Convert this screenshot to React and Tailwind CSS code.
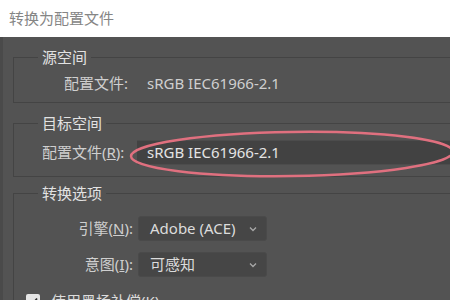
import React from "react";

const font = { fontFamily: '"Noto Sans", "Noto Sans CJK SC", sans-serif' };

const Chevron = () => (
	<svg width="10" height="10" viewBox="0 0 10 10" className="text-[#a8a8a8]">
		<path d="M2 3.5 L5 6.5 L8 3.5" fill="none" stroke="currentColor" strokeWidth="1.3" />
	</svg>
);

const Select = ({ children }) => (
	<div className="flex h-[25px] w-[129px] items-center justify-between rounded-[3px] border border-[#4a4a4a] bg-[#464646] pl-[11px] pr-[8px] text-[15px] text-[#dcdcdc]">
		<span>{children}</span>
		<Chevron />
	</div>
);

export default function App() {
	return (
		<div
			className="flex h-[300px] w-[450px] flex-col overflow-hidden bg-[#535353]"
			style={font}
		>
			<div className="flex h-[37px] shrink-0 items-center bg-white pl-[9px] text-[15px] text-[#858585]">
				转换为配置文件
			</div>

			<div className="relative flex-1 border-l-[3px] border-[#4a4a4a] pl-[10px] pt-[11px]">
				{/* 源空间 */}
				<fieldset className="mr-[-30px] h-[55px] border border-[#444444] pl-[24px]">
					<legend className="px-[4px] text-[15px] leading-[19px] text-[#e2e2e2]">
						源空间
					</legend>
					<div className="mt-[5px] flex items-center pl-[26px] text-[15px] text-[#cfcfcf]">
						<span className="w-[83px]">配置文件:</span>
						<span>sRGB IEC61966-2.1</span>
					</div>
				</fieldset>

				{/* 目标空间 */}
				<fieldset className="mr-[-30px] mt-[11px] h-[63px] border border-[#444444] pl-[28px]">
					<legend className="-ml-[4px] px-[4px] text-[15px] leading-[19px] text-[#e2e2e2]">
						目标空间
					</legend>
					<div className="mt-[7px] flex items-center text-[15px] text-[#cfcfcf]">
						<span className="w-[95px] shrink-0">
							配置文件(<span className="underline">R</span>):
						</span>
						<div className="flex h-[25px] flex-1 items-center border-y border-[#4c4c4c] bg-[#424242] pl-[10px] text-[#e4e4e4]">
							sRGB IEC61966-2.1
						</div>
					</div>
				</fieldset>

				{/* 转换选项 */}
				<fieldset className="mr-[-30px] mt-[7px] h-[140px] border border-[#444444] pl-[24px]">
					<legend className="px-[4px] text-[15px] leading-[19px] text-[#e2e2e2]">
						转换选项
					</legend>
					<div className="mt-[13px] flex flex-col gap-[11px] text-[15px] text-[#cfcfcf]">
						<div className="flex items-center">
							<span className="w-[100px] shrink-0 pr-[5px] text-right">
								引擎(<span className="underline">N</span>):
							</span>
							<Select>Adobe (ACE)</Select>
						</div>
						<div className="flex items-center">
							<span className="w-[100px] shrink-0 pr-[5px] text-right">
								意图(<span className="underline">I</span>):
							</span>
							<Select>可感知</Select>
						</div>
						<div className="-ml-[12px] mt-[2px] flex items-center gap-[11px]">
							<div className="flex h-[14px] w-[14px] items-center justify-center rounded-[2px] bg-[#e6e6e6]">
								<svg width="11" height="11" viewBox="0 0 11 11">
									<path d="M2 5.5 L4.5 8 L9 2.5" fill="none" stroke="#333" strokeWidth="1.8" />
								</svg>
							</div>
							<span className="text-[#dcdcdc]">
								使用黑场补偿(<span className="underline">K</span>)
							</span>
						</div>
					</div>
				</fieldset>

				{/* highlight ellipse */}
				<svg
					className="pointer-events-none absolute left-0 top-0"
					width="450"
					height="263"
				>
					<ellipse
						cx="289"
						cy="117"
						rx="161"
						ry="22"
						fill="none"
						stroke="#e0707f"
						strokeWidth="2.5"
						transform="rotate(-0.8 289 117)"
					/>
				</svg>
			</div>
		</div>
	);
}
